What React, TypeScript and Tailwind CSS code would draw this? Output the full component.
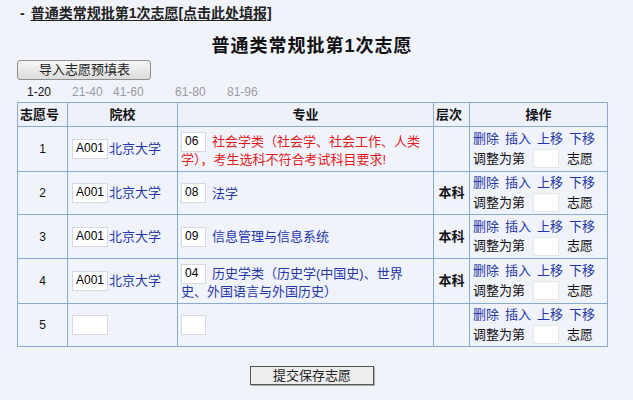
import React from "react";

const font = { fontFamily: '"Liberation Sans", "Noto Sans CJK SC", sans-serif' };

function Box({ w, h, v }: { w: string; h: string; v?: string }) {
  return (
    <span
      className={`inline-block align-top bg-white border border-[#d6d9e0] text-[12px] leading-[16px] pl-[3px] text-black ${w} ${h}`}
    >
      {v}
    </span>
  );
}

function Ops() {
  return (
    <div className="text-[13px] leading-[18px] pl-[3px]">
      <div className="text-[#2636a8] flex gap-[6px]">
        <span>删除</span>
        <span>插入</span>
        <span>上移</span>
        <span>下移</span>
      </div>
      <div className="flex items-center text-[#111] mt-[1px]">
        <span>调整为第</span>
        <span className="inline-block w-[26px] h-[19px] bg-white border border-[#e4e6ec] ml-[8px] mr-[8px]" />
        <span>志愿</span>
      </div>
    </div>
  );
}

type Row = {
  n: string;
  school?: boolean;
  code?: string;
  l1?: string;
  l2?: string;
  red?: boolean;
  level?: string;
  h: string;
};

const rows: Row[] = [
  {
    n: "1",
    school: true,
    code: "06",
    l1: "社会学类（社会学、社会工作、人类",
    l2: "学），考生选科不符合考试科目要求!",
    red: true,
    h: "h-[45px]",
  },
  { n: "2", school: true, code: "08", l1: "法学", level: "本科", h: "h-[43px]" },
  { n: "3", school: true, code: "09", l1: "信息管理与信息系统", level: "本科", h: "h-[44px]" },
  {
    n: "4",
    school: true,
    code: "04",
    l1: "历史学类（历史学(中国史)、世界",
    l2: "史、外国语言与外国历史）",
    level: "本科",
    h: "h-[45px]",
  },
  { n: "5", h: "h-[43px]" },
];

export default function App() {
  const bd = "border border-[#8aabd0]";
  return (
    <div className="w-[633px] h-[400px] bg-[#f1f3fb] text-[#111] overflow-hidden" style={font}>
      <div className="pl-[20px] pt-[5px] text-[14px] font-bold text-[#222] leading-[17px]">
        <span className="mr-[6px]">-</span>
        <span className="underline underline-offset-2">普通类常规批第1次志愿[点击此处填报]</span>
      </div>
      <div className="pl-[17px] w-[607px]">
        <div className="text-center text-[18px] font-bold mt-[13px] leading-[22px] tracking-[1px] text-[#111]">
          普通类常规批第1次志愿
        </div>
        <button className="mt-[2px] w-[134px] h-[20px] rounded-[3px] border border-[#8f8f8f] bg-gradient-to-b from-[#f7f7f7] to-[#dcdcdc] text-[13px] leading-[18px] text-[#222] text-left pl-[21px]">
          导入志愿预填表
        </button>
        <div className="flex text-[12px] leading-[14px] mt-[4px] pl-[10px] text-[#9a9aa6]">
          <span className="text-[#111] w-[45px]">1-20</span>
          <span className="w-[41px]">21-40</span>
          <span className="w-[62px]">41-60</span>
          <span className="w-[52px]">61-80</span>
          <span>81-96</span>
        </div>
        <table className={`mt-[3px] w-[590px] table-fixed border-collapse ${bd}`}>
          <colgroup>
            <col className="w-[50px]" />
            <col className="w-[110px]" />
            <col className="w-[256px]" />
            <col className="w-[36px]" />
            <col className="w-[138px]" />
          </colgroup>
          <thead>
            <tr className="h-[24px] text-[13px] font-bold bg-[#eef1fa]">
              <th className={`${bd} px-[2px] text-left`}>志愿号</th>
              <th className={bd}>院校</th>
              <th className={bd}>专业</th>
              <th className={`${bd} text-left pl-[2px]`}>层次</th>
              <th className={bd}>操作</th>
            </tr>
          </thead>
          <tbody className="text-[13px]">
            {rows.map((r) => (
              <tr key={r.n} className={r.h}>
                <td className={`${bd} text-center text-[12px]`}>{r.n}</td>
                <td className={`${bd} pl-[4px]`}>
                  <div className="flex items-center">
                    <Box w="w-[36px]" h="h-[20px]" v={r.school ? "A001" : ""} />
                    {r.school && <span className="text-[#2636a8] ml-[1px] text-[13px]">北京大学</span>}
                  </div>
                </td>
                <td className={`${bd} pl-[3px] pr-[2px]`}>
                  {r.l1 ? (
                    <div className={r.red ? "text-[#e01b1b]" : "text-[#2636a8]"}>
                      <div className={`flex items-center ${r.l2 ? "h-[18px] mt-[2px]" : ""}`}>
                        <Box w="w-[25px]" h="h-[20px]" v={r.code} />
                        <span className="ml-[6px] leading-[17px] whitespace-nowrap">{r.l1}</span>
                      </div>
                      {r.l2 && <div className="leading-[17px] whitespace-nowrap">{r.l2}</div>}
                    </div>
                  ) : (
                    <Box w="w-[25px]" h="h-[20px]" />
                  )}
                </td>
                <td className={`${bd} text-center font-bold`}>{r.level}</td>
                <td className={bd}>
                  <Ops />
                </td>
              </tr>
            ))}
          </tbody>
        </table>
        <div className="flex justify-center mt-[19px]">
          <button className="w-[124px] h-[19px] border border-[#555] bg-[#ededed] text-[13px] leading-[17px] text-[#222] shadow-[1px_1px_0_#aaa]">
            提交保存志愿
          </button>
        </div>
      </div>
    </div>
  );
}
